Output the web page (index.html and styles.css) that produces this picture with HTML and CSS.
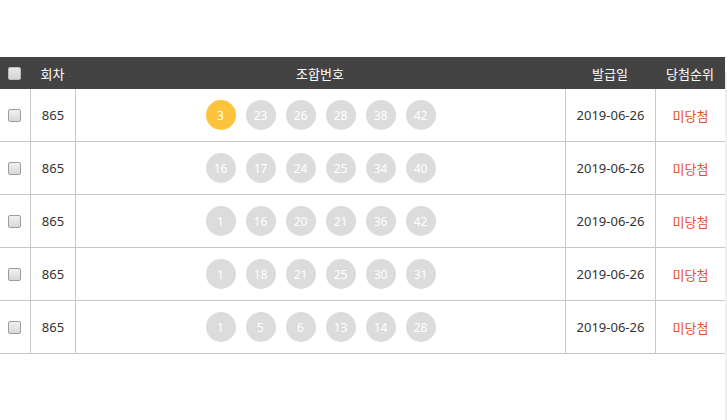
FILE: index.html
```html
<!DOCTYPE html>
<html lang="ko">
<head>
<meta charset="utf-8">
<link rel="stylesheet" href="styles.css">
</head>
<body>
<div class="wrap">
  <div class="grid">
    <div class="hd c-chk"><span class="chk"></span></div>
    <div class="hd">회차</div>
    <div class="hd">조합번호</div>
    <div class="hd">발급일</div>
    <div class="hd">당첨순위</div>

    <div class="cell c-chk"><span class="chk"></span></div>
    <div class="cell bl">865</div>
    <div class="cell bl balls"><span class="ball y">3</span><span class="ball">23</span><span class="ball">26</span><span class="ball">28</span><span class="ball">38</span><span class="ball">42</span></div>
    <div class="cell bl">2019-06-26</div>
    <div class="cell bl res">미당첨</div>

    <div class="cell c-chk"><span class="chk"></span></div>
    <div class="cell bl">865</div>
    <div class="cell bl balls"><span class="ball">16</span><span class="ball">17</span><span class="ball">24</span><span class="ball">25</span><span class="ball">34</span><span class="ball">40</span></div>
    <div class="cell bl">2019-06-26</div>
    <div class="cell bl res">미당첨</div>

    <div class="cell c-chk"><span class="chk"></span></div>
    <div class="cell bl">865</div>
    <div class="cell bl balls"><span class="ball">1</span><span class="ball">16</span><span class="ball">20</span><span class="ball">21</span><span class="ball">36</span><span class="ball">42</span></div>
    <div class="cell bl">2019-06-26</div>
    <div class="cell bl res">미당첨</div>

    <div class="cell c-chk"><span class="chk"></span></div>
    <div class="cell bl">865</div>
    <div class="cell bl balls"><span class="ball">1</span><span class="ball">18</span><span class="ball">21</span><span class="ball">25</span><span class="ball">30</span><span class="ball">31</span></div>
    <div class="cell bl">2019-06-26</div>
    <div class="cell bl res">미당첨</div>

    <div class="cell c-chk"><span class="chk"></span></div>
    <div class="cell bl">865</div>
    <div class="cell bl balls"><span class="ball">1</span><span class="ball">5</span><span class="ball">6</span><span class="ball">13</span><span class="ball">14</span><span class="ball">28</span></div>
    <div class="cell bl">2019-06-26</div>
    <div class="cell bl res">미당첨</div>
  </div>
</div>
</body>
</html>
```
FILE: styles.css
```css
html, body {
  margin: 0;
  padding: 0;
}
body {
  background: #fff linear-gradient(#efefef, #efefef) no-repeat right 0 top 72px / 2px 100%;
  font-family: "Noto Sans", "Noto Sans CJK KR", sans-serif;
  font-size: 13px;
  color: #333;
  width: 727px;
  height: 420px;
  overflow: hidden;
}
.wrap {
  padding-top: 57px;
  width: 725px;
}
.grid {
  display: grid;
  grid-template-columns: 30px 45px 490px 90px 70px;
  grid-auto-rows: 53px;
  grid-template-rows: 32px;
}
.hd {
  background: #444343;
  color: #fff;
  display: flex;
  align-items: center;
  justify-content: center;
  font-family: "Noto Sans CJK KR", sans-serif;
  font-size: 13px;
}
.cell {
  display: flex;
  align-items: center;
  justify-content: center;
  border-bottom: 1px solid #c8c8c8;
}
.bl {
  border-left: 1px solid #c8c8c8;
}
.c-chk {
  justify-content: flex-start;
  padding-left: 8px;
}
.chk {
  display: block;
  width: 11px;
  height: 11px;
  border: 1px solid #9d9d9d;
  border-radius: 2px;
  background: linear-gradient(#f1f1f1, #d8d8d8);
}
.hd .chk {
  border-color: #bdbdbd;
  background: linear-gradient(#e8e8e8, #d4d4d4);
}
.balls {
  gap: 10px;
}
.ball {
  width: 30px;
  height: 30px;
  border-radius: 50%;
  background: #dcdcdc;
  color: #fff;
  font-size: 12px;
  display: flex;
  align-items: center;
  justify-content: center;
}
.ball.y {
  background: #fcc43c;
}
.res {
  color: #e5521c;
  font-family: "Noto Sans CJK KR", sans-serif;
}
```
